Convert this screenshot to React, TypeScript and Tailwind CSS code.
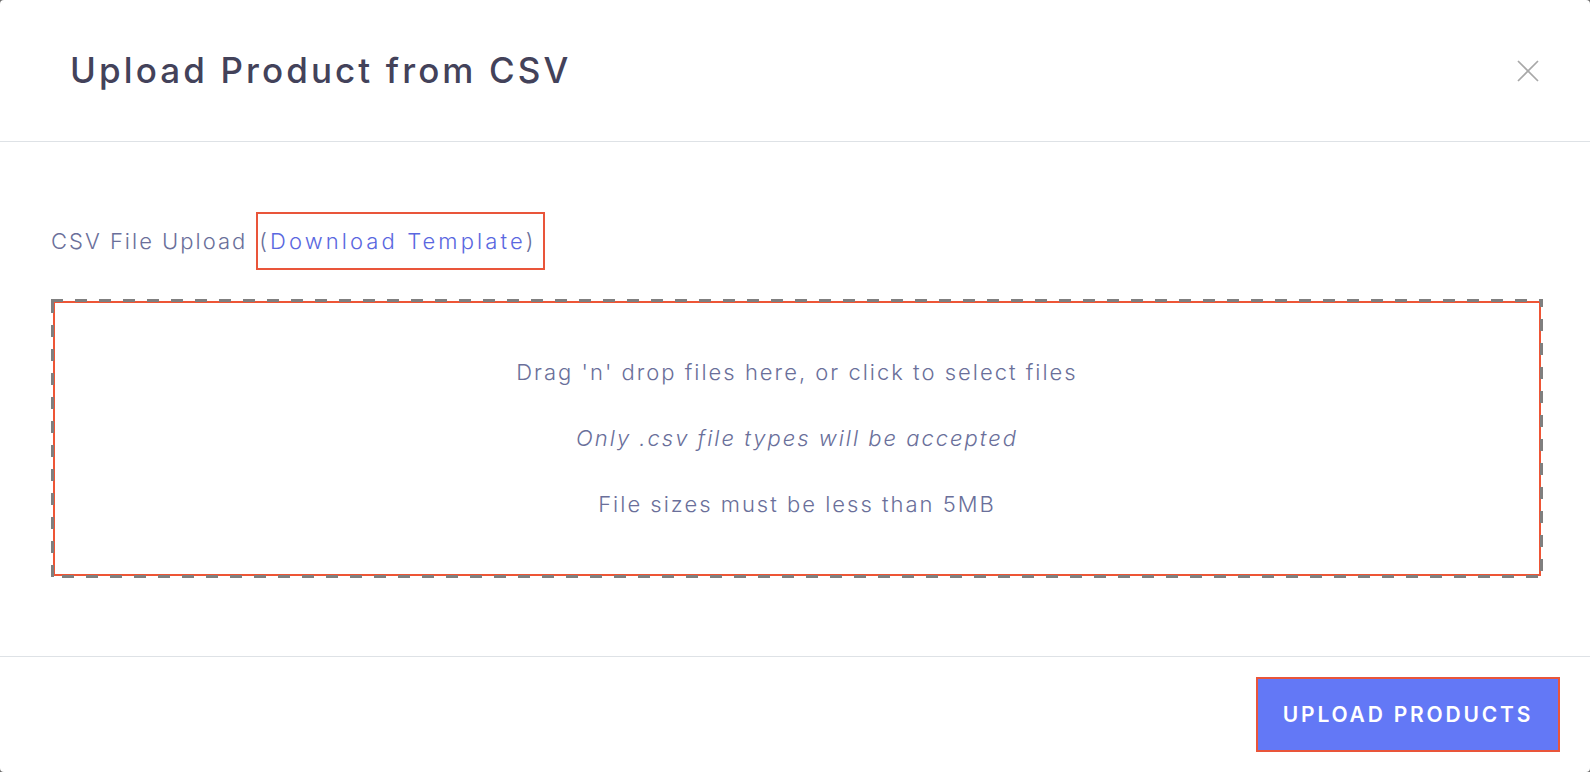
const font = { fontFamily: "Inter, 'Open Sans', sans-serif" };

export default function App() {
  return (
    <div className="h-screen w-full bg-[#6b6b6b]" style={font}>
      <div className="flex h-full flex-col rounded-[4px] bg-white">
        {/* header */}
        <div className="flex h-[142px] shrink-0 items-center justify-between border-b border-[#dee2e6] pl-[70px] pr-[51px]">
          <h1 className="text-[35px] font-medium tracking-[3.1px] text-[#43425a]">Upload Product from CSV</h1>
          <button className="text-[#a8a8a8]" aria-label="Close">
            <svg width="22" height="22" viewBox="0 0 22 22" fill="none" stroke="currentColor" strokeWidth="1.7">
              <path d="M1 1 L21 21 M21 1 L1 21" />
            </svg>
          </button>
        </div>

        {/* body */}
        <div className="flex-1 pl-[51px] pr-[47px] pt-[70px]">
          <div className="flex items-center text-[22px] font-light tracking-[2px] text-[#6a6f9a]">
            <span>CSV File Upload</span>
            <span className="ml-[9px] flex h-[58px] items-center border-2 border-[#e9553a] pl-[1px] pr-[6px] tracking-[3.1px]">
              (<a className="text-[#5a67e0]">Download Template</a>)
            </span>
          </div>

          <div className="relative mt-[29px] flex h-[279px] flex-col items-center justify-center gap-[33px] text-[22px] font-light tracking-[2px] text-[#6a6f9a] outline-[2.5px] -outline-offset-[4px] outline-[#ee5535]">
            <svg className="pointer-events-none absolute inset-0 h-full w-full overflow-hidden" aria-hidden>
              <rect x="0" y="0" width="100%" height="100%" fill="none" stroke="#7f7f7f" strokeWidth="6" strokeDasharray="12 12" />
            </svg>
            <p>Drag 'n' drop files here, or click to select files</p>
            <p className="italic">Only .csv file types will be accepted</p>
            <p>File sizes must be less than 5MB</p>
          </div>
        </div>

        {/* footer */}
        <div className="flex h-[116px] shrink-0 items-center justify-end border-t border-[#dee2e6] pr-[30px]">
          <button className="h-[75px] w-[304px] border-2 border-[#e9553a] bg-[#6378f6] text-[21px] font-semibold tracking-[2.8px] text-white">
            UPLOAD PRODUCTS
          </button>
        </div>
      </div>
    </div>
  );
}
